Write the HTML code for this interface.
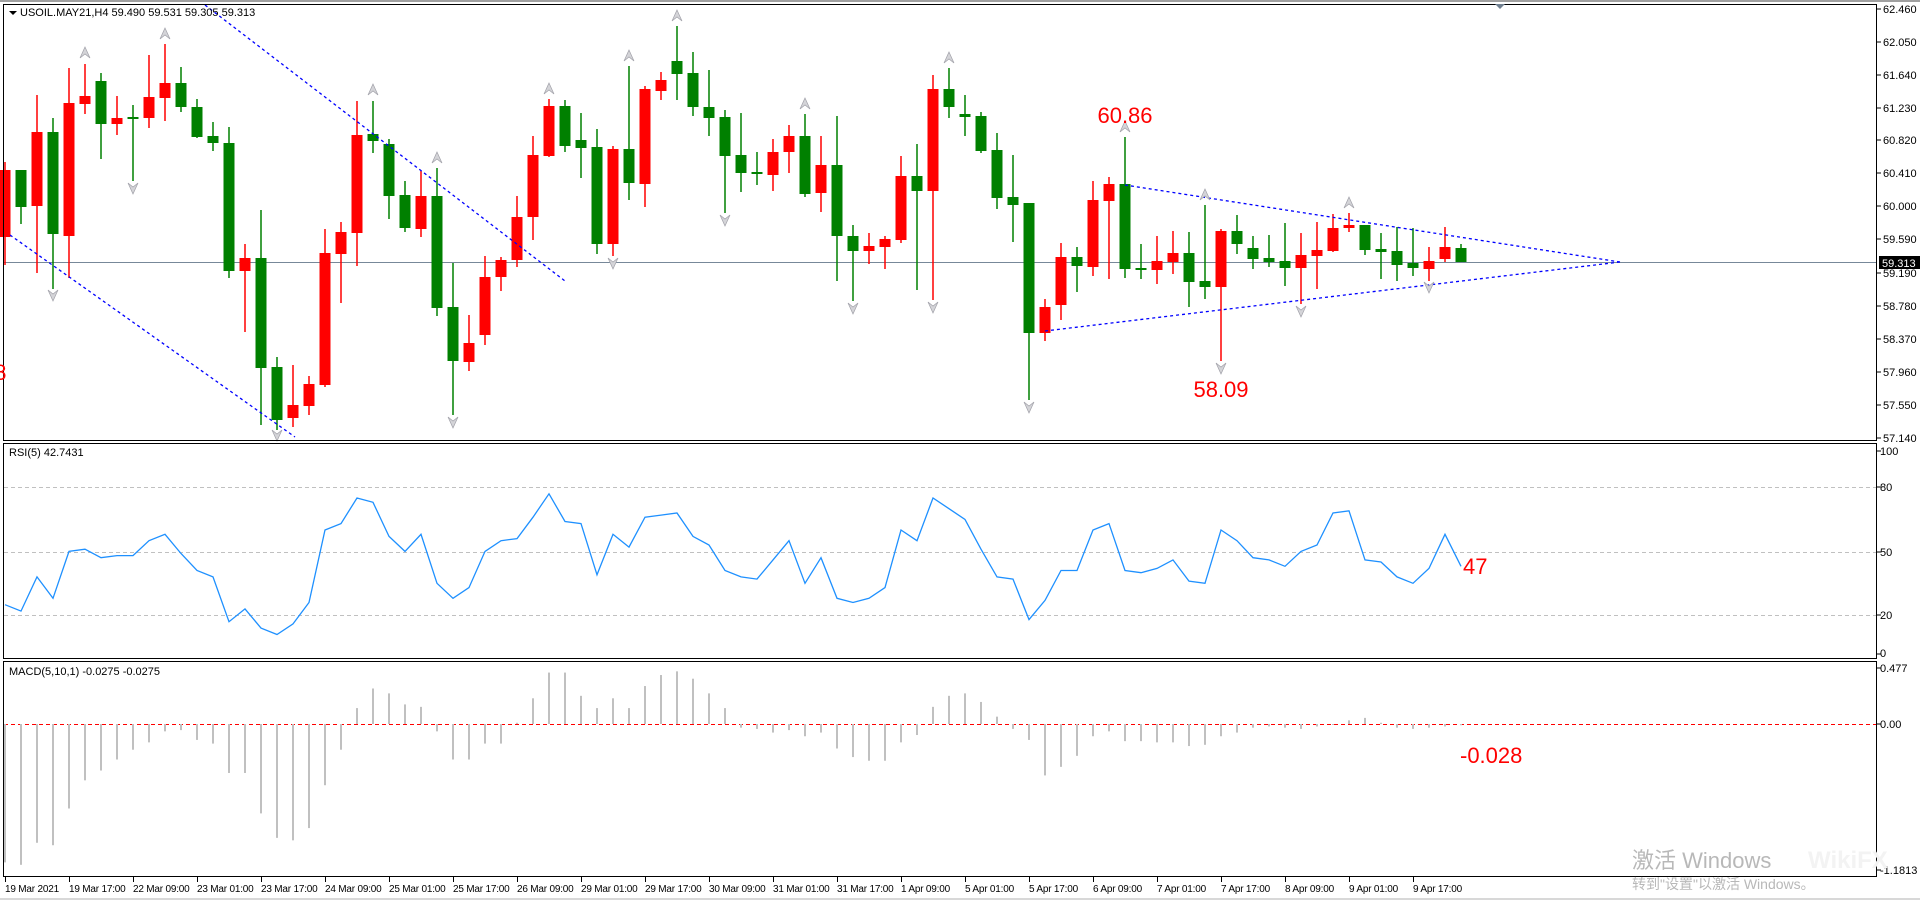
<!DOCTYPE html>
<html><head><meta charset="utf-8">
<style>
html,body{margin:0;padding:0;background:#fff;width:1920px;height:900px;overflow:hidden}
svg{display:block}
text{font-family:"Liberation Sans","DejaVu Sans",sans-serif}
.ax{font-size:11px;fill:#000}
.tx{font-size:10px;fill:#000;letter-spacing:-0.2px}
</style></head><body>
<svg id="s" width="1920" height="900" viewBox="0 0 1920 900" xmlns="http://www.w3.org/2000/svg">
<rect x="0" y="0" width="1920" height="900" fill="#fff"/>
<rect x="0" y="0" width="1920" height="2" fill="#a0a0a0"/>
<rect x="0" y="898" width="1920" height="2" fill="#d8d8d8"/>
<g id="grid"></g>
<g id="main"></g>
<rect x="3.5" y="4.5" width="1873" height="436" fill="none" stroke="#000" stroke-width="1"/>
<rect x="3.5" y="443.5" width="1873" height="215" fill="none" stroke="#000" stroke-width="1"/>
<rect x="3.5" y="661.5" width="1873" height="215" fill="none" stroke="#000" stroke-width="1"/>
<polygon points="1495,4 1505,4 1500,9" fill="#708090"/>
<polygon points="9,11 17,11 13,15" fill="#000"/>
<text x="20" y="16" class="ax">USOIL.MAY21,H4  59.490 59.531 59.305 59.313</text>
<text x="9" y="456" class="ax">RSI(5) 42.7431</text>
<text x="9" y="675" class="ax">MACD(5,10,1) -0.0275 -0.0275</text>
<text x="1125" y="123" font-size="22" fill="#ff0000" text-anchor="middle">60.86</text>
<text x="1221" y="397" font-size="22" fill="#ff0000" text-anchor="middle">58.09</text>
<text x="-18" y="380" font-size="22" fill="#ff0000">58</text>
<text x="1463" y="574" font-size="22" fill="#ff0000">47</text>
<text x="1460" y="763" font-size="22" fill="#ff0000">-0.028</text>
<g class="ax">
<text x="1883" y="13">62.460</text>
<text x="1883" y="46">62.050</text>
<text x="1883" y="79">61.640</text>
<text x="1883" y="112">61.230</text>
<text x="1883" y="144">60.820</text>
<text x="1883" y="177">60.410</text>
<text x="1883" y="210">60.000</text>
<text x="1883" y="243">59.590</text>
<text x="1883" y="277">59.190</text>
<text x="1883" y="310">58.780</text>
<text x="1883" y="343">58.370</text>
<text x="1883" y="376">57.960</text>
<text x="1883" y="409">57.550</text>
<text x="1883" y="442">57.140</text>
</g>
<rect x="1879" y="256" width="41" height="13" fill="#000"/>
<text x="1882" y="267" font-size="11" fill="#fff">59.313</text>
<g class="ax">
<text x="1880" y="455">100</text>
<text x="1880" y="491">80</text>
<text x="1880" y="556">50</text>
<text x="1880" y="619">20</text>
<text x="1880" y="657">0</text>
<text x="1880" y="672">0.477</text>
<text x="1880" y="728">0.00</text>
<text x="1880" y="874">-1.1813</text>
</g>
<g class="tx">
<text x="5" y="892">19 Mar 2021</text>
<text x="69" y="892">19 Mar 17:00</text>
<text x="133" y="892">22 Mar 09:00</text>
<text x="197" y="892">23 Mar 01:00</text>
<text x="261" y="892">23 Mar 17:00</text>
<text x="325" y="892">24 Mar 09:00</text>
<text x="389" y="892">25 Mar 01:00</text>
<text x="453" y="892">25 Mar 17:00</text>
<text x="517" y="892">26 Mar 09:00</text>
<text x="581" y="892">29 Mar 01:00</text>
<text x="645" y="892">29 Mar 17:00</text>
<text x="709" y="892">30 Mar 09:00</text>
<text x="773" y="892">31 Mar 01:00</text>
<text x="837" y="892">31 Mar 17:00</text>
<text x="901" y="892">1 Apr 09:00</text>
<text x="965" y="892">5 Apr 01:00</text>
<text x="1029" y="892">5 Apr 17:00</text>
<text x="1093" y="892">6 Apr 09:00</text>
<text x="1157" y="892">7 Apr 01:00</text>
<text x="1221" y="892">7 Apr 17:00</text>
<text x="1285" y="892">8 Apr 09:00</text>
<text x="1349" y="892">9 Apr 01:00</text>
<text x="1413" y="892">9 Apr 17:00</text>
</g>
<text x="1632" y="868" font-size="22" fill="#b8b8b8" font-family="'Liberation Sans','Noto Sans CJK SC',sans-serif">激活 Windows</text>
<text x="1632" y="889" font-size="14" fill="#b8b8b8" font-family="'Liberation Sans','Noto Sans CJK SC',sans-serif">转到"设置"以激活 Windows。</text>
<text x="1808" y="868" font-size="24" fill="#f3f3f3" font-weight="bold">WikiFX</text>
</svg>
<script>
var NS="http://www.w3.org/2000/svg",s=document.getElementById('main'),g=document.getElementById('grid');
function el(t,a,p){var e=document.createElementNS(NS,t);for(var k in a)e.setAttribute(k,a[k]);(p||s).appendChild(e);return e;}
var C=[[0,170,237,162,265],[1,170,207,170,224],[0,132,206,95,273],[1,132,234,118,289],[0,103,236,68,278],[0,96,104,64,114],[1,81,124,73,159],[0,118,124,96,135],[1,117,119,105,181],[0,97,118,55,128],[0,83,98,44,121],[1,83,107,67,112],[1,107,137,99,138],[1,136,143,122,151],[1,143,271,127,278],[0,258,271,244,332],[1,258,368,210,425],[1,367,420,357,430],[0,405,418,365,427],[0,384,406,376,415],[0,253,385,229,387],[0,232,254,222,303],[0,135,233,101,266],[1,134,141,101,153],[1,144,196,139,219],[1,195,228,181,232],[0,196,229,171,237],[1,196,308,168,316],[1,307,361,263,415],[0,343,362,315,371],[0,277,335,256,345],[0,260,277,257,291],[0,217,260,196,267],[0,155,217,136,240],[0,106,156,99,157],[1,106,146,100,152],[1,140,148,113,178],[1,147,244,129,254],[0,149,244,146,256],[1,149,183,66,200],[0,89,184,86,207],[0,80,91,72,100],[1,61,74,26,100],[1,73,107,52,116],[1,107,118,70,136],[1,117,156,110,213],[1,155,173,113,192],[1,172,174,152,185],[0,152,175,139,191],[0,136,152,125,173],[1,136,194,114,197],[0,165,193,136,212],[1,165,236,116,281],[1,236,251,225,301],[0,246,251,233,264],[0,239,247,236,269],[0,176,240,156,243],[1,176,191,144,290],[0,89,191,75,300],[1,89,107,68,118],[1,114,117,95,136],[1,116,151,112,153],[1,150,198,133,209],[1,197,205,155,242],[1,203,333,203,400],[0,307,333,299,341],[0,257,305,243,320],[1,257,266,247,292],[0,200,267,181,276],[0,184,201,177,279],[1,184,269,137,278],[1,268,270,244,279],[0,261,270,236,284],[0,253,262,231,274],[1,253,282,232,307],[1,281,287,205,299],[0,231,287,229,361],[1,231,244,215,254],[1,248,259,236,269],[1,258,262,235,267],[1,261,268,223,286],[0,255,268,233,304],[0,250,256,222,289],[0,228,251,214,252],[0,225,228,213,232],[1,225,250,225,255],[1,249,252,233,279],[1,251,265,227,281],[1,263,268,228,276],[0,261,269,247,281],[0,247,259,227,262],[1,248,262,244,262]];
function X(k){return 5+16*k;}
el('line',{x1:4,y1:262.5,x2:1877,y2:262.5,stroke:'#778899','stroke-width':1});
C.forEach(function(c,k){var x=X(k),col=c[0]?'#008000':'#ff0000';
el('rect',{x:x-0.75,y:c[3],width:1.5,height:c[4]-c[3],fill:col});
var h=Math.max(c[2]-c[1],2);el('rect',{x:x-5.5,y:c[1],width:11,height:h,fill:col});});
[[205,5,565,281],[10,235,295,437],[1125,185,1620,262],[1045,331,1620,262]].forEach(function(l){
el('line',{x1:l[0],y1:l[1],x2:l[2],y2:l[3],stroke:'#0000ff','stroke-width':1.3,'stroke-dasharray':'3,3'});});
function up(x,y){el('path',{d:'M'+x+','+(y-6)+' L'+(x+5)+','+(y+5)+' L'+x+','+(y+1)+' L'+(x-5)+','+(y+5)+' Z',fill:'#d4d4d8',stroke:'#a0a0a8','stroke-width':0.7});}
function dn(x,y){el('path',{d:'M'+x+','+(y+6)+' L'+(x+5)+','+(y-5)+' L'+x+','+(y-1)+' L'+(x-5)+','+(y-5)+' Z',fill:'#d4d4d8',stroke:'#a0a0a8','stroke-width':0.7});}
[[85,53],[165,34],[373,90],[437,158],[549,89],[629,56],[677,16],[805,104],[949,58],[1125,127],[1205,195],[1349,203]].forEach(function(p){up(p[0],p[1]);});
[[133,188],[53,295],[277,435],[453,422],[613,263],[725,220],[853,308],[933,307],[1029,407],[1221,368],[1301,311],[1429,287]].forEach(function(p){dn(p[0],p[1]);});
[487,552,615].forEach(function(y){el('line',{x1:4,y1:y+0.5,x2:1877,y2:y+0.5,stroke:'#c0c0c0','stroke-dasharray':'4,3'},g);});
var R=[25,22,38,28,50,51,47,48,48,55,58,49,41,38,17,23,14,11,16,26,60,63,75,73,57,50,58,35,28,33,50,55,56,66,77,64,63,39,58,52,66,67,68,57,53,41,38,37,46,55,35,47,28,26,28,33,60,55,75,70,65,51,38,37,18,27,41,41,60,63,41,40,42,46,36,35,60,55,47,46,43,50,53,68,69,46,45,38,35,42,58,43];
var pts=R.map(function(v,k){return X(k)+','+(658-v*2.133).toFixed(1);}).join(' ');
el('polyline',{points:pts,fill:'none',stroke:'#1e90ff','stroke-width':1.3});
el('line',{x1:4,y1:724.5,x2:1877,y2:724.5,stroke:'#ff0000','stroke-dasharray':'4,3'},g);
var M=[704,706,688,690,660,637,629,620,612,606,597,596,604,607,631,631,664,684,686,676,641,612,578,562,566,575,577,597,620,620,607,607,590,570,549,549,568,578,570,578,560,551,548,554,566,578,594,595,598,596,601,598,611,618,621,621,606,600,577,568,566,573,585,595,604,633,626,617,601,597,605,605,606,606,609,608,601,598,594,593,594,595,593,591,588,586,590,594,595,594,593,592];
M.forEach(function(v,k){var y=724+(v-591)*1.2245;var a=Math.min(y,724),b=Math.max(y,724);el('rect',{x:X(k)-1,y:a,width:2,height:Math.max(b-a,1),fill:'#c0c0c0'});});
var ys=[9,42,75,108,140,173,206,239,273,306,339,372,405,438];
ys.forEach(function(y){el('line',{x1:1877,y1:y,x2:1881,y2:y,stroke:'#000'});});
[451,487,552,615,654,668,724,870].forEach(function(y){el('line',{x1:1877,y1:y,x2:1881,y2:y,stroke:'#000'});});
for(var i=0;i<23;i++){var x=5+64*i;el('line',{x1:x+0.5,y1:877,x2:x+0.5,y2:882,stroke:'#000'});}
</script>
</body></html>
